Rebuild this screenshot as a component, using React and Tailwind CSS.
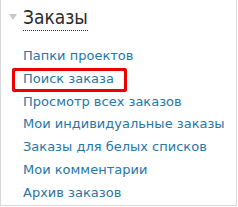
export default function App() {
  const items = [
    "Папки проектов",
    "Поиск заказа",
    "Просмотр всех заказов",
    "Мои индивидуальные заказы",
    "Заказы для белых списков",
    "Мои комментарии",
    "Архив заказов",
  ];
  return (
    <div className="w-[237px] h-[206px] bg-white border-l border-r border-b border-[#d8d8d8] relative" style={{ fontFamily: '"DejaVu Sans", Verdana, sans-serif' }}>
      <div className="flex items-start pt-[6px]">
        <div className="w-[22px] flex justify-center pt-[8px] pl-[2px]">
          <svg width="8" height="6" viewBox="0 0 8 6"><path d="M0 0 L8 0 L4 6 Z" fill="#c8c8c8" /></svg>
        </div>
        <div className="text-[19px] leading-[23px] text-[#2b2b2b] border-b border-dotted border-[#333] pb-[1px]" style={{ fontFamily: '"DejaVu Sans Condensed", "DejaVu Sans", sans-serif', fontStretch: 'condensed' }}>Заказы</div>
      </div>
      <ul className="pl-[22px] pt-[13px] flex flex-col">
        {items.map((t, i) => (
          <li key={i} className="text-[13px] leading-[23px] h-[22.8px] text-[#2776a6] relative">
            {i === 1 && (
              <span className="absolute left-[-11px] top-[1px] w-[115px] h-[24px] border-[3px] border-[#ee0000] rounded-[2px]" />
            )}
            {t}
          </li>
        ))}
      </ul>
    </div>
  );
}
